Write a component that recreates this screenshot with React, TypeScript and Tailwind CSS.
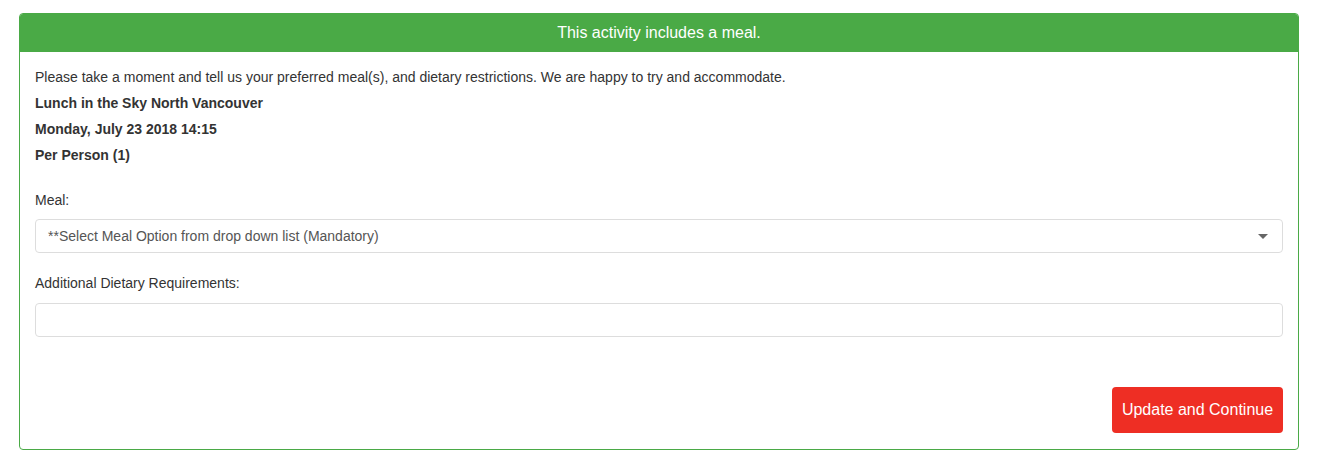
export default function App() {
  return (
    <div className="min-h-screen bg-white pt-[13px] px-[19px] font-['Liberation_Sans',Arial,sans-serif] text-[#333]">
      <div className="border border-[#4aaa46] rounded-[4px] overflow-hidden">
        {/* header */}
        <div className="bg-[#4aaa46] h-[38px] flex items-center justify-center text-white text-[16px]">
          This activity includes a meal.
        </div>

        <div className="px-[15px] pt-[12px] pb-[16px]">
          <div className="text-[14px] leading-[26px]">
            <p>Please take a moment and tell us your preferred meal(s), and dietary restrictions. We are happy to try and accommodate.</p>
            <p className="font-bold">Lunch in the Sky North Vancouver</p>
            <p className="font-bold">Monday, July 23 2018 14:15</p>
            <p className="font-bold">Per Person (1)</p>
          </div>

          {/* meal select */}
          <div className="mt-[22px]">
            <label className="block text-[14px] leading-[20px]">Meal:</label>
            <div className="mt-[9px] h-[34px] border border-[#ddd] rounded-[4px] flex items-center justify-between pl-[12px] pr-[14px] text-[14px] text-[#555]">
              <span>**Select Meal Option from drop down list (Mandatory)</span>
              <span className="w-0 h-0 border-l-[5px] border-r-[5px] border-t-[5px] border-l-transparent border-r-transparent border-t-[#666]" />
            </div>
          </div>

          {/* dietary input */}
          <div className="mt-[20px]">
            <label className="block text-[14px] leading-[20px]">Additional Dietary Requirements:</label>
            <input
              type="text"
              className="mt-[10px] block w-full h-[34px] border border-[#ddd] rounded-[4px] px-[12px] text-[14px] text-[#555] outline-none"
            />
          </div>

          <div className="flex justify-end mt-[50px]">
            <button className="h-[46px] w-[171px] bg-[#ee2e24] text-white text-[16px] rounded-[4px]">
              Update and Continue
            </button>
          </div>
        </div>
      </div>
    </div>
  );
}
